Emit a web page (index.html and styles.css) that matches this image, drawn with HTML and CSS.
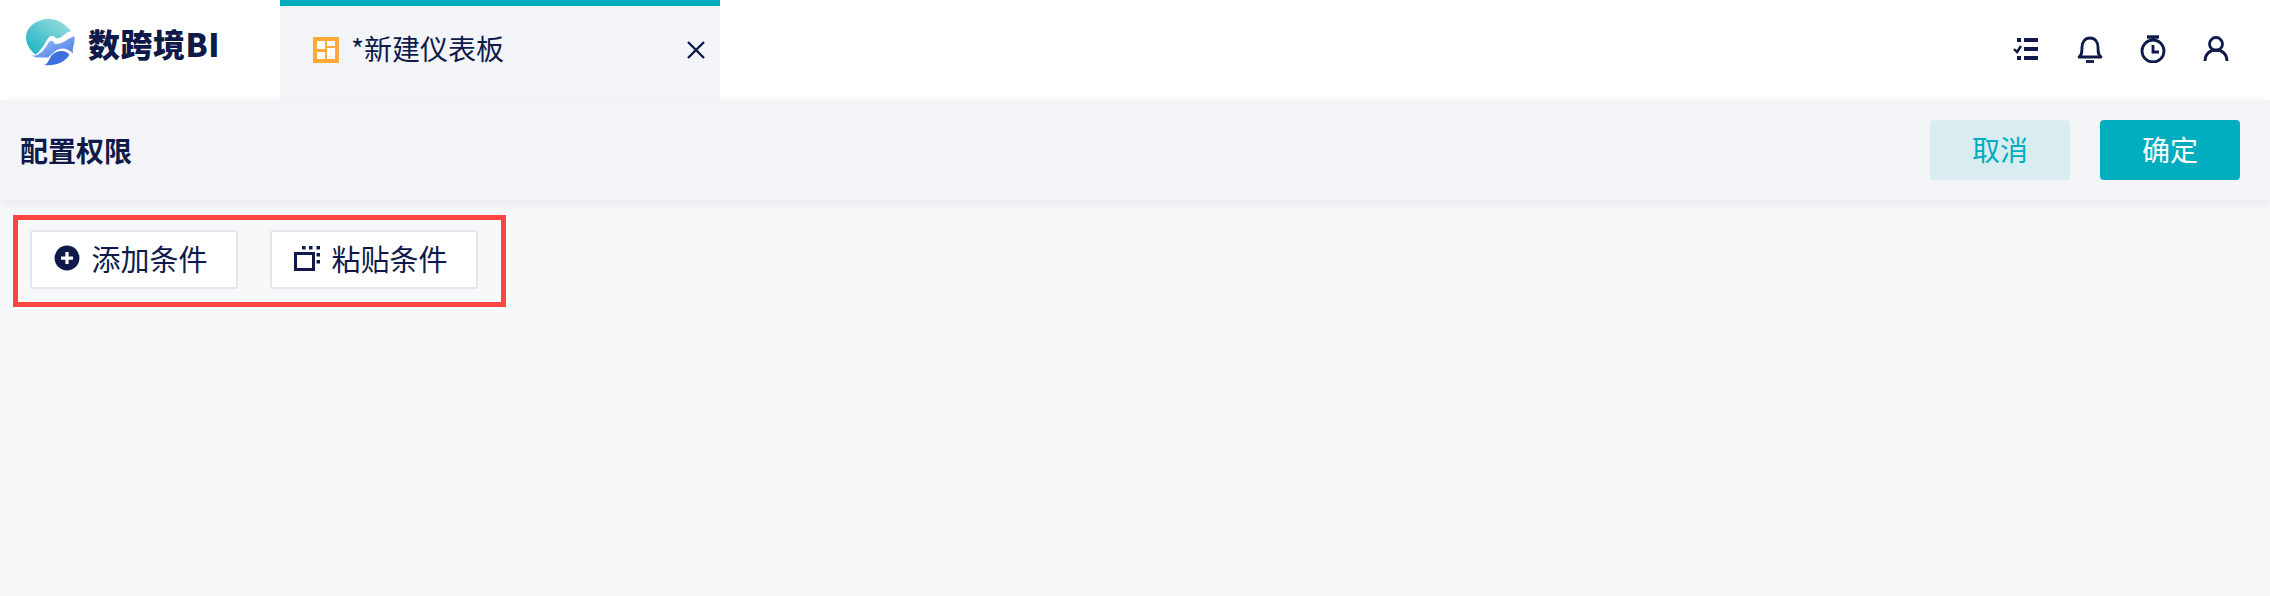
FILE: index.html
```html
<!DOCTYPE html>
<html lang="zh-CN">
<head>
    <meta charset="UTF-8">
    <meta name="viewport" content="width=device-width, initial-scale=1.0">
    <title>配置权限</title>
    <link rel="stylesheet" href="styles.css">
</head>
<body>
    <header class="topbar">
        <div class="logo">
            <svg class="logo-mark" width="52" height="50" viewBox="0 0 54 50">
                <defs>
                    <linearGradient id="logoTeal" x1="0" y1="1" x2="1" y2="0">
                        <stop offset="0" stop-color="#14b0c4"/>
                        <stop offset="1" stop-color="#a5e0df"/>
                    </linearGradient>
                    <linearGradient id="logoBlue" x1="0" y1="0" x2="1" y2="1">
                        <stop offset="0" stop-color="#a9c8f8"/>
                        <stop offset="1" stop-color="#3f74e6"/>
                    </linearGradient>
                </defs>
                <path d="M24 0C33 0 41 5 47 13C40 13 38 21 31 20C27 15 24 18 21 23C18 29 14 34 10 37C4 33 0 25 0 20C0 8 11 0 24 0Z" fill="url(#logoTeal)"/>
                <path d="M6 38C13 39 18 33 22 27C25 21 28 22 30 26C37 27 42 21 50 18C52 25 47 30 49 36C42 29 36 30 31 33C26 36 24 41 20 40C15 40 10 41 6 38Z" fill="url(#logoBlue)"/>
                <path d="M19 48C25 45 24 38 30 35C36 32 42 33 45 37C42 44 32 49 19 48Z" fill="#3e6fe0"/>
            </svg>
            <span class="logo-text">数跨境BI</span>
        </div>
        <div class="tab">
            <svg class="tab-icon" width="26" height="26" viewBox="0 0 26 26">
                <rect width="26" height="26" rx="1" fill="#ffa939"/>
                <rect x="4" y="4" width="8" height="8" fill="#fff"/>
                <rect x="14" y="4" width="8" height="5" fill="#fff"/>
                <rect x="4" y="15" width="8" height="7" fill="#fff"/>
                <rect x="14" y="11" width="8" height="11" fill="#fff"/>
            </svg>
            <span class="tab-title">*新建仪表板</span>
            <svg class="tab-close" width="18" height="18" viewBox="0 0 18 18">
                <path d="M1 1L17 17M17 1L1 17" stroke="#0f1a4a" stroke-width="2.4" fill="none"/>
            </svg>
        </div>
        <div class="tools">
            <svg width="28" height="28" viewBox="0 0 28 28">
                <path d="M4 3h4v4H4zM4 21h4v4H4zM11 3h14v4H11zM11 12h14v4H11zM11 21h14v4H11z" fill="#0f1a4a"/>
                <path d="M1 14l3 3 4-6" stroke="#0f1a4a" stroke-width="2.400" fill="none"/>
            </svg>
            <svg width="28" height="28" viewBox="0 0 28 28">
                <path d="M3 22C6 20 6 17 6 12C6 7 9 3 14 3C19 3 22 7 22 12C22 17 22 20 25 22Z" stroke="#0f1a4a" stroke-width="2.800" fill="none" stroke-linejoin="round"/>
                <path d="M10 26.500h8" stroke="#0f1a4a" stroke-width="2.800"/>
            </svg>
            <svg width="28" height="28" viewBox="0 0 28 28">
                <circle cx="14" cy="16" r="11" stroke="#0f1a4a" stroke-width="2.800" fill="none"/>
                <path d="M8 2h12" stroke="#0f1a4a" stroke-width="3.400"/>
                <path d="M14 3v3M14 10v7h6" stroke="#0f1a4a" stroke-width="2.800" fill="none"/>
            </svg>
            <svg width="28" height="28" viewBox="0 0 28 28">
                <circle cx="14" cy="9" r="6.500" stroke="#0f1a4a" stroke-width="2.800" fill="none"/>
                <path d="M3 26C3 19 8 15 14 15C20 15 25 19 25 26" stroke="#0f1a4a" stroke-width="2.800" fill="none"/>
            </svg>
        </div>
    </header>

    <div class="subbar">
        <h1 class="subbar-title">配置权限</h1>
        <div class="subbar-actions">
            <button class="btn btn-cancel">取消</button>
            <button class="btn btn-ok">确定</button>
        </div>
    </div>

    <main class="content">
        <div class="highlight">
            <button class="cond-btn">
                <svg width="26" height="26" viewBox="0 0 24 24">
                    <circle cx="12" cy="12" r="11.500" fill="#0f1a4a"/>
                    <path d="M12 6.500v11M6.500 12h11" stroke="#fff" stroke-width="3"/>
                </svg>
                添加条件
            </button>
            <button class="cond-btn">
                <svg width="26" height="26" viewBox="0 0 26 26">
                    <path d="M1.500 8.500h18v16h-18z" stroke="#0f1a4a" stroke-width="3" fill="none"/>
                    <path d="M8 1h3.500v3.500H8zM15 1h3.500v3.500H15zM22.500 1H26v3.500h-3.500zM22.500 8H26v3.500h-3.500zM22.500 15H26v3.500h-3.500z" fill="#0f1a4a"/>
                </svg>
                粘贴条件
            </button>
        </div>
    </main>
</body>
</html>
```

FILE: styles.css
```css
* {
    box-sizing: border-box;
}
html, body {
    height: 100%;
}
body {
    margin: 0;
    display: flex;
    flex-direction: column;
    font-family: "Noto Sans CJK SC", "Liberation Sans", sans-serif;
    color: #0f1a4a;
    background: #f7f8fa;
}
.topbar {
    height: 100px;
    flex: none;
    display: flex;
    background: #fff;
}
.logo {
    width: 280px;
    display: flex;
    align-items: center;
    gap: 10px;
    padding: 0 0 14px 26px;
}
.logo-text {
    font-size: 32px;
    font-weight: 900;
    letter-spacing: 0.5px;
    line-height: 1;
}
.tab {
    width: 440px;
    display: flex;
    align-items: center;
    padding: 0 15px 0 33px;
    background: #f2f4f8;
    border-top: 6px solid #00adbf;
}
.tab-icon {
    margin-right: 12px;
    margin-bottom: 6px;
}
.tab-title {
    flex: 1;
    font-size: 28px;
    line-height: 1;
    margin-bottom: 10px;
}
.tab-close {
    margin-bottom: 6px;
}
.tools {
    margin-left: auto;
    display: flex;
    align-items: center;
    gap: 35px;
    padding: 0 40px 3px 0;
}
.subbar {
    height: 100px;
    flex: none;
    display: flex;
    align-items: center;
    justify-content: space-between;
    padding: 0 30px 0 20px;
    background: #f2f4f8;
    box-shadow: 0 3px 10px rgba(20, 30, 70, 0.07);
}
.subbar-title {
    margin: 0;
    font-size: 28px;
    font-weight: 700;
    line-height: 1;
}
.subbar-actions {
    display: flex;
    gap: 30px;
}
.btn {
    width: 140px;
    height: 60px;
    border: 0;
    border-radius: 4px;
    padding: 0 0 2px;
    font: inherit;
    font-size: 28px;
}
.btn-cancel {
    background: #d9ecf0;
    color: #00adbf;
}
.btn-ok {
    background: #00adbf;
    color: #fff;
}
.content {
    flex: 1;
    padding: 15px 0 0 13px;
}
.highlight {
    display: inline-flex;
    gap: 32px;
    padding: 10px 23px 13px 12px;
    border: 5px solid #ff4444;
}
.cond-btn {
    width: 208px;
    height: 59px;
    display: flex;
    align-items: center;
    justify-content: center;
    gap: 11px;
    padding: 0 6px 3px 0;
    border: 2px solid #e5e7ec;
    border-radius: 3px;
    background: #fff;
    color: #0f1a4a;
    font: inherit;
    font-size: 29px;
}
```
